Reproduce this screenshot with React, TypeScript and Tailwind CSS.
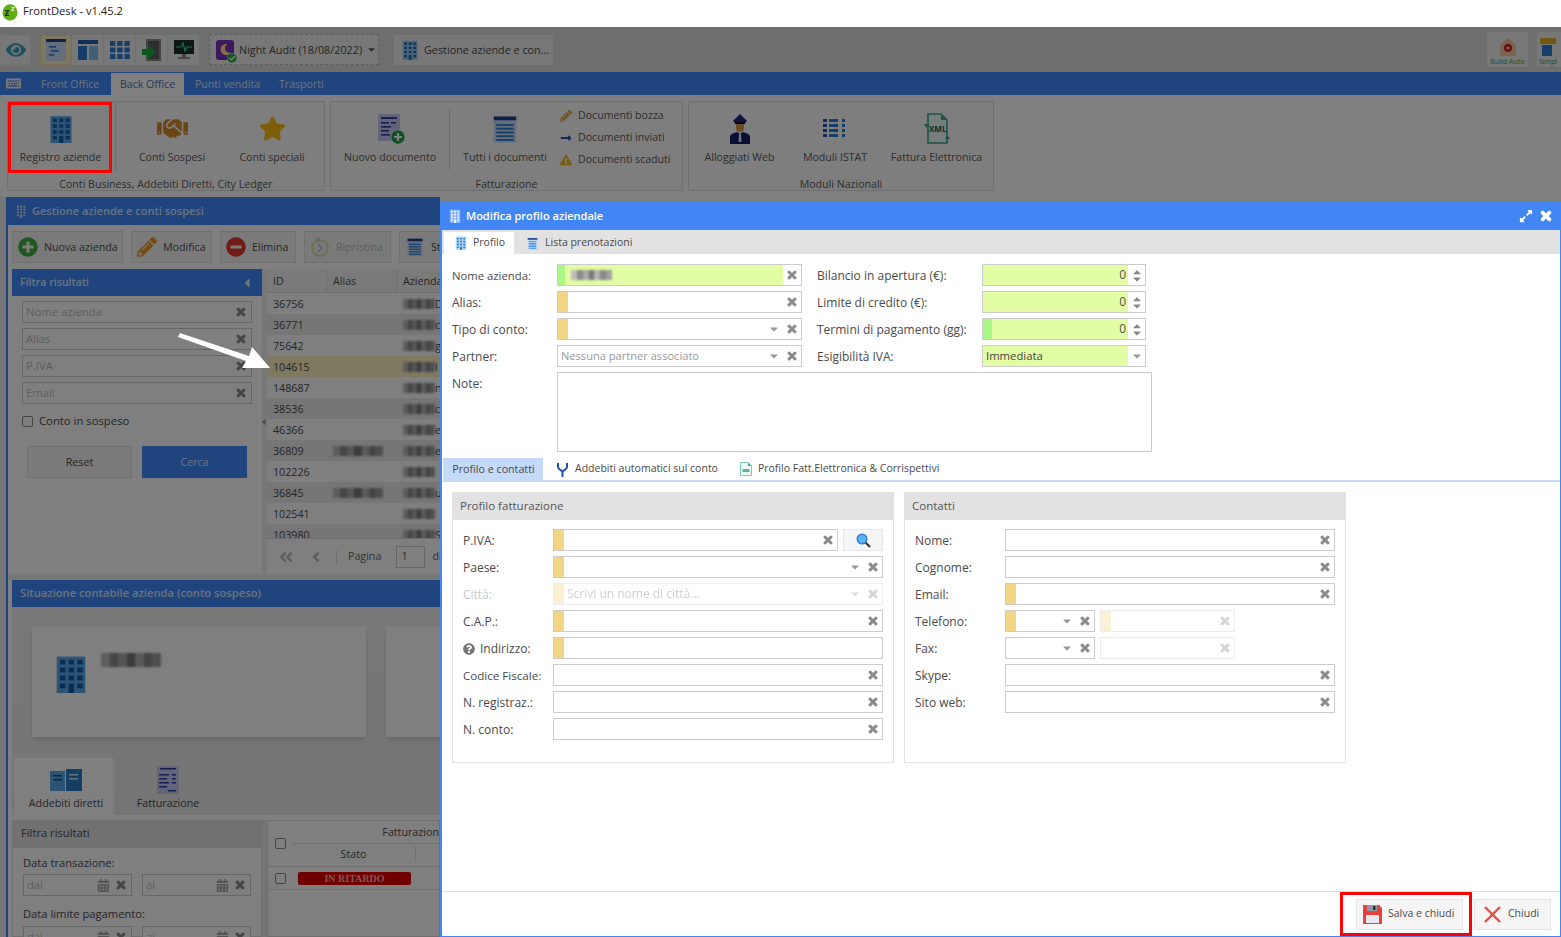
import React from "react";
import { FaTimes, FaCaretDown, FaCaretUp, FaEye, FaHandshake, FaStar, FaPlusCircle, FaMinusCircle, FaPencilAlt, FaQuestionCircle, FaExpandAlt, FaLongArrowAltRight, FaExclamationTriangle, FaAngleDoubleLeft, FaAngleLeft, FaCalendarAlt, FaCaretLeft, FaMoon, FaCheckCircle, FaKeyboard } from "react-icons/fa";

const Building = ({ s = 20, c = "#5aa8ea", d = "#1060b0" }: { s?: number; c?: string; d?: string }) => (
  <svg className="shrink-0" width={s} height={s} viewBox="0 0 24 24">
    <rect x="3" y="1" width="18" height="23" fill={c} />
    {[3, 8, 13, 18].map((y) =>
      [5, 10.5, 16].map((x) => <rect key={`${x}-${y}`} x={x} y={y} width="3.4" height="3" fill={d} />)
    )}
    <rect x="10.5" y="20" width="3.4" height="4" fill={d} />
  </svg>
);

const ListDoc = ({ s = 24 }: { s?: number }) => (
  <svg className="shrink-0" width={s} height={s} viewBox="0 0 24 24">
    <rect x="3" y="2" width="18" height="21" fill="#c6dcf5" />
    <rect x="3" y="2" width="18" height="3" fill="#1f3f8f" />
    {[8, 11, 14, 17, 20].map((y) => <rect key={y} x="5" y={y} width="14" height="1.5" fill="#2a7fd5" />)}
  </svg>
);

const Blur = ({ className = "" }: { className?: string }) => (
  <span className={`inline-flex shrink-0 blur-[1px] ${className}`}>
    <span className="flex-1 bg-[#bbb]" />
    <span className="flex-1 bg-[#8a8a8a]" />
    <span className="flex-1 bg-[#aaa]" />
    <span className="flex-1 bg-[#777]" />
    <span className="flex-1 bg-[#b5b5b5]" />
    <span className="flex-1 bg-[#888]" />
    <span className="flex-1 bg-[#a0a0a0]" />
  </span>
);

const X = ({ className = "text-[#888] text-[12px]" }: { className?: string }) => (
  <FaTimes className={`shrink-0 ${className}`} stroke="currentColor" strokeWidth={40} />
);

type FieldProps = {
  w: string;
  marker?: "o" | "g";
  fill?: string;
  clear?: boolean;
  arrow?: boolean;
  ph?: string;
  dis?: boolean;
  children?: React.ReactNode;
};

const Field = ({ w, marker, fill, clear = true, arrow, ph, dis, children }: FieldProps) => (
  <div className={`${w} h-[22px] shrink-0 flex items-stretch border border-[#ccc] bg-white ${dis ? "opacity-35" : ""}`}>
    <div className={`flex-1 flex items-center min-w-0 ${fill || ""}`}>
      {marker === "o" && <span className="w-[10px] h-full bg-[#f2d585] shrink-0" />}
      {marker === "g" && <span className="w-[7px] h-full bg-[#a9f784] shrink-0" />}
      {ph && <span className="pl-[3px] text-[#999] text-[11.1px] truncate">{ph}</span>}
      {children}
    </div>
    {arrow && <span className="w-[18px] flex items-center justify-center"><FaCaretDown className="text-[#999] text-[12px]" /></span>}
    {clear && <span className="w-[18px] flex items-center justify-center"><X /></span>}
  </div>
);

const Spin = ({ value, marker }: { value: string; marker?: "g" }) => (
  <div className="w-[164px] h-[22px] shrink-0 flex border border-[#ccc] bg-white">
    <div className="w-[145px] bg-[#e2fda3] flex items-center">
      {marker && <span className="w-[9px] h-full bg-[#a9f784]" />}
      <span className="ml-auto pr-[2px] text-[#555]">{value}</span>
    </div>
    <div className="flex-1 flex flex-col items-center justify-center -space-y-[5px]">
      <FaCaretUp className="text-[#888] text-[12px]" />
      <FaCaretDown className="text-[#888] text-[12px]" />
    </div>
  </div>
);

const RibbonBtn = ({ w, label, children }: { w: string; label: string; children: React.ReactNode }) => (
  <div className={`${w} flex flex-col items-center`}>
    <div className="h-[33px] mt-[10px] flex items-center justify-center">{children}</div>
    <span className="mt-[5px] whitespace-nowrap">{label}</span>
  </div>
);

const RibbonGroup = ({ w, label, children }: { w: string; label: string; children: React.ReactNode }) => (
  <div className={`${w} h-[90px] shrink-0 flex flex-col border border-[#dcdcdc] rounded-[2px] bg-[#fcfcfc]`}>
    <div className="h-[75px] shrink-0 flex">{children}</div>
    <div className="h-[13px] leading-[14px] text-center whitespace-nowrap">{label}</div>
  </div>
);

const Row = ({ label, lw = "w-[101px]", children, dim }: { label: React.ReactNode; lw?: string; children: React.ReactNode; dim?: boolean }) => (
  <div className="flex items-center">
    <span className={`${lw} shrink-0 pt-[2px] whitespace-nowrap ${dim ? "text-[#c8c8c8]" : ""}`}>{label}</span>
    {children}
  </div>
);

const ToolBtn = ({ w, children, cls = "" }: { w: string; children: React.ReactNode; cls?: string }) => (
  <div className={`${w} h-[32px] shrink-0 flex items-center gap-[6px] px-[5px] border border-[#e0e0e0] bg-[#f5f5f5] whitespace-nowrap ${cls}`}>{children}</div>
);

const FilterInput = ({ ph }: { ph: string }) => (
  <div className="h-[22px] flex items-center border border-[#ccc] px-[3px] bg-white">
    <span className="flex-1 text-[#bbb] text-[11.3px]">{ph}</span>
    <X className="text-[#888] text-[12px] mr-[1px]" />
  </div>
);

const DateInput = ({ ph }: { ph: string }) => (
  <div className="w-[109px] h-[22px] shrink-0 flex items-center border border-[#ccc] px-[3px] bg-white">
    <span className="flex-1 text-[#bbb]">{ph}</span>
    <FaCalendarAlt className="text-[#aaa] text-[13px] mr-[5px]" />
    <X className="text-[#888] text-[12px] mr-[1px]" />
  </div>
);

const rows: [string, string, string][] = [
  ["36756", "", "D"], ["36771", "", "ca"], ["75642", "", "g"], ["104615", "", "l"],
  ["148687", "", "n"], ["38536", "", "c"], ["46366", "", "e"], ["36809", "x", "e"],
  ["102226", "", ""], ["36845", "x", "u"], ["102541", "", ""], ["103980", "", "S"],
];

export default function App() {
  return (
    <div className="relative w-[1561px] h-[937px] overflow-hidden bg-white text-[12px] text-[#4a4a4a] font-['Open_Sans',sans-serif]">
      {/* title bar */}
      <div className="h-[27px] flex items-center pl-[2px] pb-[4px] gap-[5px] text-[#222] text-[11.2px]">
        <svg width="16" height="18" viewBox="0 0 16 18">
          <ellipse cx="8" cy="9.5" rx="7.5" ry="8.2" fill="#5fae1a" />
          <text x="2.5" y="13" fontSize="10" fontWeight="700" fill="#17380a">z</text>
          <text x="9" y="8" fontSize="7" fontWeight="700" fill="#eaf5c0">z</text>
        </svg>
        <span>FrontDesk - v1.45.2</span>
      </div>

      {/* top toolbar */}
      <div className="h-[45px] bg-[#dcdcdc] flex items-center text-[10.8px]">
        <div className="w-[31px] h-[30px] flex items-center justify-center border border-[#e8e8e8] bg-[#f0f0f0]">
          <FaEye className="text-[#3aa0b8] text-[20px]" />
        </div>
        <div className="ml-[9px] flex">
          <div className="w-[32px] h-[30px] flex items-center justify-center bg-[#fff0c0] border border-[#f0dfa0]">
            <svg width="20" height="22" viewBox="0 0 20 22"><rect width="20" height="22" fill="#c6dcf5" /><rect width="20" height="3" fill="#1f3f8f" /><rect x="3" y="7" width="7" height="1.6" fill="#2a7fd5" /><rect x="5" y="11" width="8" height="1.6" fill="#2a7fd5" /><rect x="3" y="15" width="5" height="1.6" fill="#2a7fd5" /></svg>
          </div>
          <div className="w-[32px] h-[30px] flex items-center justify-center bg-[#f0f0f0] border-r border-[#e0e0e0]">
            <svg width="20" height="20" viewBox="0 0 20 20"><rect width="20" height="4" fill="#1f5fa8" /><rect y="6" width="9" height="14" fill="#2a7fd5" /><rect x="11" y="6" width="9" height="14" fill="#7fbdf0" /></svg>
          </div>
          <div className="w-[32px] h-[30px] flex items-center justify-center bg-[#f0f0f0] border-r border-[#e0e0e0]">
            <svg width="20" height="18" viewBox="0 0 20 18">
              {[0, 6.5, 13].map((y) => [0, 7.2, 14.4].map((x) => <rect key={`${x}-${y}`} x={x} y={y} width="5.4" height="5" fill="#2a7fd5" />))}
            </svg>
          </div>
          <div className="w-[32px] h-[30px] flex items-center justify-center bg-[#f0f0f0] border-r border-[#e0e0e0]">
            <svg width="20" height="24" viewBox="0 0 20 24"><rect x="4" y="1" width="15" height="22" fill="#8a8a8a" /><rect x="6" y="3" width="11" height="18" fill="#5a5a5a" /><path d="M0 11 H6 V6.5 L14 14 L6 21.5 V17 H0 Z" fill="#14b040" /></svg>
          </div>
          <div className="w-[31px] h-[30px] flex items-center justify-center bg-[#f0f0f0]">
            <svg width="20" height="20" viewBox="0 0 20 20"><rect width="20" height="14" fill="#16302e" /><path d="M2 7 H7 L9 3 L11 11 L13 7 H18" stroke="#35e090" strokeWidth="1.2" fill="none" /><rect x="8" y="14" width="4" height="3" fill="#888" /><rect x="4" y="17" width="12" height="2" fill="#888" /></svg>
          </div>
        </div>
        <div className="ml-[10px] w-[170px] h-[31px] flex items-center gap-[5px] pl-[6px] border border-dashed border-[#bbb] bg-[#f0f0f0]">
          <span className="relative w-[18px] h-[20px] shrink-0 flex items-center justify-center bg-[#7b2fbf] rounded-[3px]">
            <FaMoon className="text-[#ffe680] text-[11px]" />
            <FaCheckCircle className="absolute -right-[3px] -bottom-[3px] text-[#2fb050] text-[10px] bg-white rounded-full" />
          </span>
          <span className="whitespace-nowrap pt-[2px]">Night Audit (18/08/2022)</span>
          <FaCaretDown className="text-[#555] text-[11px] -ml-[1px]" />
        </div>
        <div className="ml-[15px] w-[159px] h-[30px] flex items-center gap-[4px] pl-[6px] bg-[#f0f0f0]">
          <Building s={20} c="#9cc8f0" d="#1d6fc0" />
          <span className="whitespace-nowrap pt-[1px]">Gestione aziende e con...</span>
        </div>
        <div className="ml-auto flex gap-[9px] items-center">
          <div className="w-[41px] h-[35px] flex flex-col items-center justify-end bg-[#f0f0f0] text-[7px] text-[#3f9a3f]">
            <svg width="18" height="20" viewBox="0 0 18 20"><path d="M9 1 L17 8 V19 H1 V8 Z" fill="#f5c8a0" /><circle cx="9" cy="11" r="4" fill="#d02020" /><circle cx="9" cy="11" r="1.6" fill="#f5c8a0" /></svg>
            <span>Build Auto</span>
          </div>
          <div className="w-[24px] h-[35px] overflow-hidden flex flex-col items-start justify-end bg-[#f0f0f0] text-[7px] text-[#3f9a3f] pl-[2px]">
            <svg className="shrink-0" width="18" height="20" viewBox="0 0 18 20"><rect x="1" y="1" width="16" height="6" fill="#e0b020" /><rect x="3" y="8" width="10" height="11" fill="#2a7fd5" /></svg>
            <span>Simpl</span>
          </div>
        </div>
      </div>

      {/* nav */}
      <div className="h-[23px] bg-[#4088fc] flex items-end text-[#d8e6ff] text-[10.6px]">
        <span className="w-[41px] h-full flex items-center pl-[6px]"><FaKeyboard className="text-[#f0f0f0] text-[15px]" /></span>
        <span className="w-[70px] h-full flex items-center pt-[2px]">Front Office</span>
        <span className="w-[73px] h-[22px] flex items-center justify-center pt-[1px] bg-white text-[#4a78c0]">Back Office</span>
        <span className="ml-[11px] w-[84px] h-full flex items-center pt-[2px]">Punti vendita</span>
        <span className="h-full flex items-center pt-[2px]">Trasporti</span>
      </div>

      {/* ribbon */}
      <div className="h-[102px] bg-white flex items-start pt-[6px] pl-[7px] gap-[5px] text-[#5a5a5a] text-[10.6px]">
        <RibbonGroup w="w-[318px]" label="Conti Business, Addebiti Diretti, City Ledger">
          <div className="w-[108px] h-[70px] border-r border-[#e0e0e0]">
            <RibbonBtn w="w-[105px]" label="Registro aziende"><Building s={28} /></RibbonBtn>
          </div>
          <RibbonBtn w="w-[112px]" label="Conti Sospesi"><FaHandshake className="text-[#d98a2b] text-[31px]" /></RibbonBtn>
          <RibbonBtn w="w-[88px]" label="Conti speciali"><FaStar className="text-[#f8bf10] text-[27px]" /></RibbonBtn>
        </RibbonGroup>
        <RibbonGroup w="w-[353px]" label="Fatturazione">
          <RibbonBtn w="w-[118px]" label="Nuovo documento">
            <span className="relative">
              <svg width="24" height="29" viewBox="0 0 24 29"><rect width="22" height="27" fill="#c8c8f0" /><rect x="3" y="3" width="16" height="2" fill="#2f3fa0" /><rect x="3" y="8" width="8" height="1.6" fill="#2f3fa0" /><rect x="13" y="8" width="5" height="1.6" fill="#2f3fa0" /><rect x="3" y="12" width="10" height="1.6" fill="#2f3fa0" /><rect x="3" y="16" width="8" height="1.6" fill="#2f3fa0" /><rect x="3" y="20" width="9" height="1.6" fill="#2f3fa0" /></svg>
              <FaPlusCircle className="absolute -right-[3px] -bottom-[1px] text-[#22a04a] text-[14px] bg-white rounded-full" />
            </span>
          </RibbonBtn>
          <div className="w-px h-[62px] mt-[6px] bg-[#dcdcdc] mr-[5px]" />
          <RibbonBtn w="w-[100px]" label="Tutti i documenti"><ListDoc s={30} /></RibbonBtn>
          <div className="pl-[5px] pt-[3px] flex flex-col">
            <span className="h-[22px] flex items-center gap-[6px] whitespace-nowrap"><FaPencilAlt className="text-[#e8a23a] text-[12px]" />Documenti bozza</span>
            <span className="h-[22px] flex items-center gap-[6px] whitespace-nowrap"><FaLongArrowAltRight className="text-[#2f4fb0] text-[12px]" />Documenti inviati</span>
            <span className="h-[22px] flex items-center gap-[6px] whitespace-nowrap"><FaExclamationTriangle className="text-[#f0b820] text-[12px]" />Documenti scaduti</span>
          </div>
        </RibbonGroup>
        <RibbonGroup w="w-[306px]" label="Moduli Nazionali">
          <RibbonBtn w="w-[101px]" label="Alloggiati Web">
            <svg width="22" height="30" viewBox="0 0 22 30">
              <path d="M4 7 L11 0 L18 7 L16 9 H6 Z" fill="#1a2a78" /><rect x="6" y="8" width="10" height="2" fill="#0c0c30" />
              <path d="M7 10 H15 V14 C15 17 13 18 11 18 C9 18 7 17 7 14 Z" fill="#d99a4a" />
              <path d="M1 30 V23 C1 20 5 19 8 18 L11 20 L14 18 C17 19 21 20 21 23 V30 Z" fill="#14206b" />
              <path d="M10 20 H12 L12.5 28 H9.5 Z" fill="#dfe6ff" />
            </svg>
          </RibbonBtn>
          <RibbonBtn w="w-[90px]" label="Moduli ISTAT">
            <svg width="26" height="24" viewBox="0 0 26 24">
              {[2, 7, 12, 17].map((y) => (
                <g key={y}>
                  <rect x="1" y={y} width="4" height="3" fill="#2f4fb0" />
                  <rect x="7" y={y} width="9" height="3" fill="#2a7fd5" />
                  <rect x="20" y={y} width="3" height="3" fill="#2a7fd5" />
                </g>
              ))}
            </svg>
          </RibbonBtn>
          <RibbonBtn w="w-[113px]" label="Fattura Elettronica">
            <svg width="26" height="32" viewBox="0 0 26 32">
              <path d="M4 1 H17 L23 7 V30 H4 Z" fill="#eefaf6" stroke="#3aa58f" strokeWidth="1.6" />
              <path d="M17 1 L23 7 H17 Z" fill="#3aa58f" />
              <text x="5" y="19" fontSize="8" fontWeight="700" fill="#0f5a4a">XML</text>
              <path d="M0 11 H5 L2.5 15 Z M21 26 L23.5 22 L26 26 Z" fill="#3aa58f" />
            </svg>
          </RibbonBtn>
        </RibbonGroup>
      </div>

      {/* background window */}
      <div className="h-[740px] w-[440px] overflow-hidden bg-[#eee] pl-[6px] text-[10.7px]">
        <div className="h-full border-l-2 border-[#4088fc] bg-[#fff] flex flex-col">
          <div className="h-[28px] shrink-0 bg-[#4088fc] flex items-center gap-[4px] pl-[6px] text-[#d8e6ff] font-semibold text-[11px]">
            <Building s={14} c="#4088fc" d="#d8e6ff" />
            <span>Gestione aziende e conti sospesi</span>
          </div>
          <div className="h-[44px] shrink-0 flex items-center gap-[8px] pl-[4px] overflow-hidden">
            <ToolBtn w="w-[111px]"><FaPlusCircle className="shrink-0 text-[#3cb040] text-[20px]" />Nuova azienda</ToolBtn>
            <ToolBtn w="w-[81px]"><FaPencilAlt className="shrink-0 text-[#e89a2a] text-[20px]" />Modifica</ToolBtn>
            <ToolBtn w="w-[76px]"><FaMinusCircle className="shrink-0 text-[#e03a30] text-[20px]" />Elimina</ToolBtn>
            <ToolBtn w="w-[87px]" cls="text-[#bbb]"><svg className="shrink-0" width="20" height="20" viewBox="0 0 20 20" fill="none" stroke="#c8dca0" strokeWidth="1.6"><circle cx="10" cy="11" r="8" /><path d="M8 7 L12 11 L8 15" stroke="#bbb" /><path d="M10 0 L7 3 L10 5" /></svg>Ripristina</ToolBtn>
            <ToolBtn w="w-[60px]"><ListDoc s={20} />Stampa</ToolBtn>
          </div>

          {/* filter + grid */}
          <div className="h-[305px] shrink-0 flex pl-[4px]">
            <div className="w-[250px] shrink-0 bg-white flex flex-col">
              <div className="h-[27px] bg-[#4088fc] flex items-center px-[8px] text-[#d8e6ff] font-semibold text-[10.6px]">
                <span className="flex-1">Filtra risultati</span>
                <FaCaretLeft className="text-[#e0e8ff] text-[14px]" />
              </div>
              <div className="px-[10px] pt-[5px] flex flex-col gap-[5px]">
                <FilterInput ph="Nome azienda" />
                <FilterInput ph="Alias" />
                <FilterInput ph="P.IVA" />
                <FilterInput ph="Email" />
              </div>
              <div className="flex items-center gap-[6px] pl-[10px] mt-[9px] text-[11.3px]">
                <span className="w-[11px] h-[11px] border border-[#888] rounded-[2px]" />
                <span>Conto in sospeso</span>
              </div>
              <div className="flex gap-[10px] pl-[15px] mt-[16px]">
                <div className="w-[105px] h-[32px] flex items-center justify-center bg-[#f5f5f5] border border-[#e0e0e0]">Reset</div>
                <div className="w-[105px] h-[32px] flex items-center justify-center bg-[#4088fc] text-[#d8e6ff]">Cerca</div>
              </div>
            </div>
            <div className="w-[5px] shrink-0 bg-[#eee] flex items-center"><FaCaretLeft className="text-[#999] text-[10px] -ml-[2px]" /></div>
            <div className="flex-1 min-w-0 flex flex-col overflow-hidden bg-white">
              <div className="h-[24px] shrink-0 flex bg-[#f5f5f5] border-b border-[#ddd]">
                <span className="w-[60px] shrink-0 pl-[6px] pt-[2px] flex items-center border-r border-[#ddd]">ID</span>
                <span className="w-[70px] shrink-0 pl-[6px] pt-[2px] flex items-center border-r border-[#ddd]">Alias</span>
                <span className="shrink-0 pl-[6px] pt-[2px] flex items-center">Azienda</span>
              </div>
              <div className="h-[245px] shrink-0 overflow-hidden">
                {rows.map(([id, alias, tail], i) => (
                  <div key={id} className={`h-[21px] pt-[1px] flex items-center ${id === "104615" ? "bg-[#fff2c0]" : i % 2 ? "bg-[#ececec]" : "bg-white"}`}>
                    <span className="w-[60px] shrink-0 pl-[6px]">{id}</span>
                    <span className="w-[70px] shrink-0 pl-[6px] flex items-center">{alias && <Blur className="w-[50px] h-[10px]" />}</span>
                    <span className="shrink-0 pl-[6px] flex items-center whitespace-nowrap"><Blur className="w-[32px] h-[10px]" />{tail}</span>
                  </div>
                ))}
              </div>
              <div className="flex-1 flex items-center pl-[11px] border-t border-[#ddd] text-[#666]">
                <FaAngleDoubleLeft className="shrink-0 text-[#bbb] text-[16px]" />
                <FaAngleLeft className="shrink-0 text-[#bbb] text-[16px] ml-[14px]" />
                <span className="w-px h-[14px] shrink-0 bg-[#ddd] ml-[12px]" />
                <span className="ml-[11px]">Pagina</span>
                <span className="ml-[15px] w-[29px] shrink-0 h-[22px] border border-[#ccc] pl-[4px] flex items-center">1</span>
                <span className="ml-[7px]">di</span>
              </div>
            </div>
          </div>

          <div className="h-[6px] shrink-0 bg-[#eee]" />
          <div className="ml-[4px] h-[27px] shrink-0 bg-[#4088fc] flex items-center pl-[8px] text-[#d8e6ff] font-semibold text-[11.2px] whitespace-nowrap">Situazione contabile azienda (conto sospeso)</div>

          <div className="ml-[4px] flex-1 min-h-0 flex flex-col bg-gradient-to-b from-[#f0f0f0] to-[#e8e8e8]">
            <div className="h-[150px] shrink-0 flex gap-[20px] pl-[20px] pt-[20px] overflow-hidden">
              <div className="w-[334px] h-[110px] shrink-0 bg-white shadow-md flex items-start pl-[20px] pt-[28px] gap-[11px]">
                <Building s={38} c="#5aa8ea" d="#0d5ca8" />
                <Blur className="w-[60px] h-[14px] -mt-[2px]" />
              </div>
              <div className="w-[334px] h-[110px] shrink-0 bg-white shadow-md" />
            </div>
            <div className="h-[58px] shrink-0 flex items-end">
              <div className="ml-[2px] w-[100px] h-[57px] bg-white flex flex-col items-center pt-[11px] pl-[4px]">
                <svg width="32" height="24" viewBox="0 0 32 24"><rect x="0" y="2" width="15" height="20" fill="#5aa9e6" /><rect x="16" y="0" width="16" height="22" fill="#2a7fc5" /><rect x="3" y="6" width="9" height="1.5" fill="#0d4a88" /><rect x="3" y="10" width="9" height="1.5" fill="#0d4a88" /><rect x="19" y="5" width="9" height="1.5" fill="#cfe8ff" /><rect x="19" y="9" width="9" height="1.5" fill="#cfe8ff" /></svg>
                <span className="mt-[2px] whitespace-nowrap">Addebiti diretti</span>
              </div>
              <div className="w-[108px] h-[57px] flex flex-col items-center pt-[8px]">
                <svg width="22" height="28" viewBox="0 0 22 28"><rect width="22" height="28" fill="#c8c8f0" /><rect x="3" y="2" width="16" height="1.5" fill="#2f3fa0" /><rect x="2" y="8" width="10" height="1.5" fill="#2f3fa0" /><rect x="15" y="8" width="4" height="1.5" fill="#2f3fa0" /><rect x="2" y="12" width="8" height="1.5" fill="#2f3fa0" /><rect x="15" y="12" width="4" height="1.5" fill="#2f3fa0" /><rect x="2" y="16" width="10" height="1.5" fill="#2f3fa0" /><rect x="15" y="16" width="4" height="1.5" fill="#2f3fa0" /><rect x="2" y="20" width="8" height="1.5" fill="#2f3fa0" /><rect x="11" y="24" width="8" height="1.5" fill="#2f3fa0" /></svg>
                <span className="mt-[1px]">Fatturazione</span>
              </div>
            </div>
            <div className="h-[5px] shrink-0 bg-white" />
            <div className="flex-1 min-h-0 flex overflow-hidden text-[11.2px]">
              <div className="w-[250px] shrink-0 bg-white border border-[#e0e0e0] flex flex-col">
                <div className="h-[27px] shrink-0 bg-[#e2e2e2] flex items-center pl-[8px] pb-[2px]">Filtra risultati</div>
                <div className="px-[10px] pt-[5px]">
                  <div className="h-[20px] leading-[20px]">Data transazione:</div>
                  <div className="flex gap-[10px] mt-[1px]"><DateInput ph="dal" /><DateInput ph="al" /></div>
                  <div className="h-[20px] leading-[20px] mt-[8px]">Data limite pagamento:</div>
                  <div className="flex gap-[10px] mt-[2px]"><DateInput ph="dal" /><DateInput ph="al" /></div>
                </div>
              </div>
              <div className="w-[5px] shrink-0" />
              <div className="flex-1 min-w-0 overflow-hidden bg-white border border-[#ddd] flex flex-col">
                <div className="h-[46px] flex border-b border-[#ddd]">
                  <span className="w-[24px] shrink-0 flex items-center justify-center"><span className="w-[11px] h-[11px] border border-[#888] rounded-[2px]" /></span>
                  <div className="flex-1 min-w-0 flex flex-col">
                    <div className="h-[23px] flex items-center justify-end whitespace-nowrap border-b border-[#ddd] text-[10.7px]">Fatturazion</div>
                    <div className="flex-1 flex items-center pb-[2px]"><span className="w-[124px] text-center border-r border-[#ddd] text-[10.7px]">Stato</span></div>
                  </div>
                </div>
                <div className="h-[23px] flex items-center border-b border-[#ddd]">
                  <span className="w-[24px] shrink-0 flex items-center justify-center"><span className="w-[11px] h-[11px] border border-[#888] rounded-[2px]" /></span>
                  <span className="ml-[6px] w-[113px] h-[13px] rounded-[2px] bg-[#e00000] flex items-center justify-center text-[#ffb0b0] text-[10px] font-bold font-['Liberation_Serif',serif]">IN RITARDO</span>
                </div>
              </div>
            </div>
          </div>
        </div>
      </div>

      {/* dim overlay */}
      <div className="absolute left-0 right-0 top-[27px] bottom-0 bg-black/50" />

      {/* callouts */}
      <div className="absolute left-[8px] top-[102px] w-[104px] h-[71px] border-[3px] border-[#ff0000]" />
      <svg className="absolute left-[170px] top-[330px]" width="110" height="50" viewBox="0 0 110 50">
        <path d="M8 7 L76 31 L72 38 L100 38 L82 17 L79 26 L10 3 Z" fill="#fff" />
      </svg>

      {/* modal */}
      <div className="absolute left-[440px] top-[202px] w-[1121px] h-[735px] bg-white border-l-2 border-r border-b border-[#4285f4] flex flex-col">
        <div className="h-[28px] shrink-0 bg-[#4285f4] flex items-center pl-[6px] pr-[7px] text-white font-semibold text-[11px]">
          <Building s={14} c="#7fb0f8" d="#eef4ff" />
          <span className="ml-[4px] flex-1">Modifica profilo aziendale</span>
          <FaExpandAlt className="text-white text-[14px] mr-[6px]" />
          <X className="text-white text-[14px]" />
        </div>
        <div className="h-[24px] shrink-0 bg-[#e2e2e2] flex items-end pl-[2px] text-[10.5px]">
          <div className="w-[70px] h-[22px] bg-white flex items-center gap-[5px] pl-[10px]"><Building s={14} c="#bcdcf8" d="#2a7fd5" />Profilo</div>
          <div className="ml-[12px] h-[22px] flex items-center gap-[6px]"><ListDoc s={13} />Lista prenotazioni</div>
        </div>

        {/* main form */}
        <div className="h-[204px] shrink-0 pl-[10px] pt-[10px]">
          <div className="flex gap-[15px]">
            <div className="flex flex-col gap-[5px]">
              <Row label={<span className="text-[11.3px]">Nome azienda:</span>} lw="w-[105px]">
                <Field w="w-[245px]" marker="g" fill="bg-[#e2fda3]"><Blur className="ml-[6px] w-[41px] h-[10px]" /></Field>
              </Row>
              <Row label="Alias:" lw="w-[105px]"><Field w="w-[245px]" marker="o" /></Row>
              <Row label="Tipo di conto:" lw="w-[105px]"><Field w="w-[245px]" marker="o" arrow /></Row>
              <Row label="Partner:" lw="w-[105px]"><Field w="w-[245px]" arrow ph="Nessuna partner associato" /></Row>
            </div>
            <div className="flex flex-col gap-[5px]">
              <Row label="Bilancio in apertura (€):" lw="w-[165px]"><Spin value="0" /></Row>
              <Row label="Limite di credito (€):" lw="w-[165px]"><Spin value="0" /></Row>
              <Row label="Termini di pagamento (gg):" lw="w-[165px]"><Spin value="0" marker="g" /></Row>
              <Row label="Esigibilità IVA:" lw="w-[165px]">
                <div className="w-[164px] h-[22px] flex border border-[#ccc]">
                  <span className="w-[145px] bg-[#e2fda3] flex items-center pl-[3px] text-[#444] text-[11.3px]">Immediata</span>
                  <span className="flex-1 flex items-center justify-center"><FaCaretDown className="text-[#999] text-[12px]" /></span>
                </div>
              </Row>
            </div>
          </div>
          <div className="flex mt-[5px]">
            <span className="w-[105px] pt-[3px]">Note:</span>
            <div className="w-[595px] h-[80px] border border-[#ccc]" />
          </div>
        </div>

        {/* sub tabs */}
        <div className="h-[24px] shrink-0 ml-[1px] flex border-b-2 border-[#c5d9f8] items-stretch text-[10.5px]">
          <div className="w-[100px] bg-[#c5d9f8] flex items-center justify-center pl-[1px] text-[10.7px]">Profilo e contatti</div>
          <div className="ml-[13px] flex items-center gap-[6px]">
            <svg width="13" height="15" viewBox="0 0 13 15" fill="none" stroke="#1f4fa0" strokeWidth="2"><path d="M2 1 V5 C2 8 6.5 8 6.5 10 V15 M11 1 V5 C11 8 6.5 8 6.5 10" /></svg>
            Addebiti automatici sul conto
          </div>
          <div className="ml-[22px] flex items-center gap-[6px]">
            <svg width="12" height="14" viewBox="0 0 12 14"><path d="M0.5 0.5 H8 L11.5 4 V13.5 H0.5 Z" fill="#eefaf6" stroke="#7fc8b8" /><path d="M8 0.5 L11.5 4 H8 Z" fill="#3aa58f" /><rect x="2.5" y="7" width="7" height="3" fill="#5fae9c" /></svg>
            Profilo Fatt.Elettronica &amp; Corrispettivi
          </div>
        </div>

        {/* panels */}
        <div className="flex-1 min-h-0 pl-[10px] pt-[10px] flex gap-[10px] items-start">
          <div className="w-[442px] h-[271px] border border-[#e2e2e2] flex flex-col">
            <div className="h-[27px] shrink-0 bg-[#e2e2e2] flex items-center pl-[7px] pb-[2px] text-[#555] text-[11.5px]">Profilo fatturazione</div>
            <div className="pt-[9px] pl-[10px] flex flex-col gap-[5px]">
              <Row label="P.IVA:" lw="w-[90px]">
                <Field w="w-[285px]" marker="o" />
                <div className="ml-[5px] w-[40px] h-[22px] border border-[#e5e5e5] bg-[#f5f5f5] flex items-center justify-center">
                  <svg width="15" height="15" viewBox="0 0 15 15"><path d="M9.5 9.5 L14 14" stroke="#333" strokeWidth="2" /><circle cx="6" cy="6" r="4.8" fill="#58b4f5" stroke="#2a7fd5" strokeWidth="1.4" /></svg>
                </div>
              </Row>
              <Row label="Paese:" lw="w-[90px]"><Field w="w-[330px]" marker="o" arrow /></Row>
              <Row label="Città:" lw="w-[90px]" dim>
                <Field w="w-[330px]" marker="o" arrow dis><span className="pl-[3px] text-[#777]">Scrivi un nome di città...</span></Field>
              </Row>
              <Row label="C.A.P.:" lw="w-[90px]"><Field w="w-[330px]" marker="o" /></Row>
              <Row label={<span className="flex items-center gap-[5px]"><FaQuestionCircle className="text-[#777] text-[12px]" />Indirizzo:</span>} lw="w-[90px]"><Field w="w-[330px]" marker="o" clear={false} /></Row>
              <Row label={<span className="text-[11.6px]">Codice Fiscale:</span>} lw="w-[90px]"><Field w="w-[330px]" /></Row>
              <Row label="N. registraz.:" lw="w-[90px]"><Field w="w-[330px]" /></Row>
              <Row label="N. conto:" lw="w-[90px]"><Field w="w-[330px]" /></Row>
            </div>
          </div>
          <div className="w-[442px] h-[271px] border border-[#e2e2e2] flex flex-col">
            <div className="h-[27px] shrink-0 bg-[#e2e2e2] flex items-center pl-[7px] pb-[2px] text-[#555] text-[11.5px]">Contatti</div>
            <div className="pt-[9px] pl-[10px] flex flex-col gap-[5px]">
              <Row label="Nome:" lw="w-[90px]"><Field w="w-[330px]" /></Row>
              <Row label="Cognome:" lw="w-[90px]"><Field w="w-[330px]" /></Row>
              <Row label="Email:" lw="w-[90px]"><Field w="w-[330px]" marker="o" /></Row>
              <Row label="Telefono:" lw="w-[90px]">
                <Field w="w-[90px]" marker="o" arrow />
                <span className="w-[5px]" />
                <Field w="w-[135px]" marker="o" dis />
              </Row>
              <Row label="Fax:" lw="w-[90px]">
                <Field w="w-[90px]" arrow />
                <span className="w-[5px]" />
                <Field w="w-[135px]" dis />
              </Row>
              <Row label="Skype:" lw="w-[90px]"><Field w="w-[330px]" /></Row>
              <Row label="Sito web:" lw="w-[90px]"><Field w="w-[330px]" /></Row>
            </div>
          </div>
        </div>

        {/* footer */}
        <div className="h-[45px] shrink-0 border-t border-[#e2e2e2] flex items-center justify-end pr-[9px] gap-[11px] text-[10.5px]">
          <div className="w-[107px] h-[31px] border border-[#e5e5e5] bg-[#f5f5f5] flex items-center gap-[6px] pl-[6px] whitespace-nowrap">
            <svg className="shrink-0" width="19" height="19" viewBox="0 0 19 19"><path d="M0 0 H16 L19 3 V19 H0 Z" fill="#e8403a" /><rect x="4" y="0" width="10" height="6" fill="#8a98a8" /><rect x="10" y="1" width="2.5" height="4" fill="#333" /><rect x="3" y="10" width="13" height="8" fill="#e8e8ee" /></svg>
            <span>Salva e chiudi</span>
          </div>
          <div className="w-[77px] h-[31px] border border-[#e5e5e5] bg-[#f5f5f5] flex items-center gap-[7px] pl-[9px]">
            <svg className="shrink-0" width="17" height="17" viewBox="0 0 17 17" stroke="#f04a3a" strokeWidth="2.4"><path d="M1 1 L16 16 M16 1 L1 16" /></svg>
            <span>Chiudi</span>
          </div>
        </div>
      </div>

      {/* save highlight */}
      <div className="absolute left-[1340px] top-[892px] w-[132px] h-[44px] border-[3px] border-[#ff0000]" />
    </div>
  );
}
